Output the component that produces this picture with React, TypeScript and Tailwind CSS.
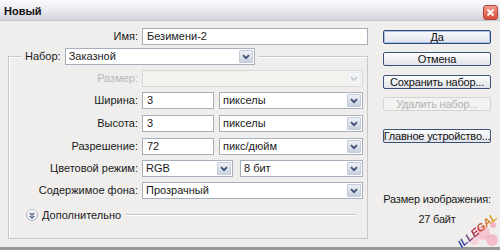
import { FC, ReactNode } from "react";

const Chevron: FC<{ faded?: boolean }> = ({ faded }) => (
  <svg width="8" height="6" viewBox="0 0 8 6">
    <path
      d="M1 1.2 L4 4.2 L7 1.2"
      fill="none"
      stroke={faded ? "#c9cdd4" : "#3c4f74"}
      strokeWidth="1.8"
    />
  </svg>
);

const Select: FC<{ value?: string; className?: string; disabled?: boolean }> = ({
  value,
  className,
  disabled,
}) => (
  <div
    className={`flex h-[17px] items-stretch border ${
      disabled ? "border-[#d6d8dc] bg-[#f4f3ef]" : "border-[#a7afbc] bg-white"
    } ${className ?? ""}`}
  >
    <div className="flex-1 truncate pl-[3px] text-[11px] leading-[15px]">{value}</div>
    <div
      className={`m-[1px] flex w-[14px] items-center justify-center rounded-[1px] border ${
        disabled
          ? "border-[#eceef2] bg-[#f3f4f7]"
          : "border-[#c3cbd9] bg-gradient-to-b from-[#eef1f7] to-[#c9d1e0]"
      }`}
    >
      <Chevron faded={disabled} />
    </div>
  </div>
);

const Input: FC<{ value: string; className?: string }> = ({ value, className }) => (
  <div
    className={`h-[17px] border border-[#a7afbc] bg-white pl-[4px] text-[11px] leading-[15px] ${
      className ?? ""
    }`}
  >
    {value}
  </div>
);

const Row: FC<{ label: string; children: ReactNode; className?: string; faded?: boolean }> = ({
  label,
  children,
  className,
  faded,
}) => (
  <div className={`flex items-center gap-[4px] ${className ?? ""}`}>
    <div
      className={`w-[129px] text-right text-[11px] leading-[17px] ${
        faded ? "text-[#b8b8b8]" : "text-[#1a1a1a]"
      }`}
    >
      {label}
    </div>
    {children}
  </div>
);

const Button: FC<{ children: ReactNode; className?: string; disabled?: boolean; primary?: boolean }> = ({
  children,
  className,
  disabled,
  primary,
}) => (
  <div
    className={`flex h-[14px] w-[108px] items-center justify-center whitespace-nowrap rounded-[2px] border text-[11px] leading-[12px] tracking-[-0.2px] ${
      disabled
        ? "border-[#d3d3d3] bg-[#f2f2f0] text-[#b2b2b2]"
        : primary
        ? "border-[#2f4a78] bg-gradient-to-b from-[#fbfbfd] to-[#dfe3ee] text-[#111] shadow-[inset_0_0_0_1px_#a9c0e8]"
        : "border-[#3d5278] bg-gradient-to-b from-[#fdfdfd] to-[#e0e3ea] text-[#111]"
    } ${className ?? ""}`}
  >
    {children}
  </div>
);

export default function App() {
  return (
    <div className="relative flex h-[250px] w-[500px] flex-col overflow-hidden bg-[#7d7d7d] font-['Liberation_Sans',Tahoma,sans-serif]">
      {/* title bar */}
      <div className="flex h-[21px] items-center justify-between border-b border-[#c4c3cc] bg-gradient-to-b from-[#fbfbfd] via-[#eaeaf0] to-[#d3d2dc] pl-[4px] pr-[2px]">
        <span className="mt-[2px] text-[11px] font-bold text-[#111]">Новый</span>
        <div className="mt-[4px] flex h-[15px] w-[15px] items-center justify-center rounded-[3px] border border-[#b0453a] bg-gradient-to-b from-[#f09a8c] to-[#d54a3a]">
          <svg width="9" height="9" viewBox="0 0 9 9">
            <path d="M1.5 1.5 L7.5 7.5 M7.5 1.5 L1.5 7.5" stroke="#fff" strokeWidth="1.8" />
          </svg>
        </div>
      </div>

      {/* body */}
      <div className="flex h-[226px] bg-[#efeeed] text-[#1a1a1a]">
        {/* left */}
        <div className="w-[375px] shrink-0 pl-[8px]">
          <div className="mt-[7px] flex items-center gap-[4px]">
            <div className="w-[130px] text-right text-[11px] leading-[17px]">Имя:</div>
            <Input value="Безимени-2" className="w-[226px]" />
          </div>

          <div className="mt-[11px] h-[183px] w-[360px] border border-[#c8c8c8] shadow-[inset_1px_1px_0_#fff]">
            <div className="-mt-[9px] ml-[13px] flex w-[236px] items-center gap-[4px] bg-[#efeeed] px-[3px]">
              <span className="text-[11px] leading-[17px]">Набор:</span>
              <Select value="Заказной" className="w-[194px]" />
            </div>

            <div className="mt-[5px] flex flex-col gap-[5px] pr-[4px]">
              <Row label="Размер:" faded>
                <Select disabled className="w-[221px]" />
              </Row>
              <Row label="Ширина:">
                <Input value="3" className="w-[72px]" />
                <Select value="пикселы" className="ml-[1px] w-[144px]" />
              </Row>
              <Row label="Высота:" className="mt-[1px]">
                <Input value="3" className="w-[72px]" />
                <Select value="пикселы" className="ml-[1px] w-[144px]" />
              </Row>
              <Row label="Разрешение:" className="mt-[1px]">
                <Input value="72" className="w-[72px]" />
                <Select value="пикс/дюйм" className="ml-[1px] w-[144px]" />
              </Row>
              <Row label="Цветовой режим:">
                <Select value="RGB" className="w-[91px]" />
                <Select value="8 бит" className="ml-[3px] w-[123px]" />
              </Row>
              <Row label="Содержимое фона:">
                <Select value="Прозрачный" className="w-[221px]" />
              </Row>
            </div>

            <div className="mt-[10px] flex items-center pl-[17px] pr-[11px]">
              <div className="flex h-[12px] w-[12px] items-center justify-center rounded-full border border-[#b9bdc6] bg-gradient-to-b from-white to-[#dfe2e8]">
                <svg width="6" height="7" viewBox="0 0 6 7">
                  <path d="M0.8 0.8 L3 3 L5.2 0.8 M0.8 3.8 L3 6 L5.2 3.8" fill="none" stroke="#3c4f74" strokeWidth="1.2" />
                </svg>
              </div>
              <span className="ml-[4px] text-[11px] leading-[12px]">Дополнительно</span>
              <div className="ml-[5px] h-[2px] flex-1 border-t border-b border-t-[#c6c6c6] border-b-white" />
            </div>
          </div>
        </div>

        {/* right */}
        <div className="flex flex-1 flex-col pl-[8px]">
          <Button primary className="mt-[9px]">Да</Button>
          <Button className="mt-[8px]">Отмена</Button>
          <Button className="mt-[9px]">Сохранить набор...</Button>
          <Button disabled className="mt-[8px]">Удалить набор...</Button>
          <Button className="mt-[18px]">Главное устройство...</Button>
          <div className="mt-[46px] w-[108px] whitespace-nowrap text-center text-[11px] leading-[20px] tracking-[-0.2px]">
            <div>Размер изображения:</div>
            <div>27 байт</div>
          </div>
        </div>
      </div>
      <div className="h-[3px] bg-[#9a9a9a]" />

      {/* watermark */}
      <div className="pointer-events-none absolute left-[458px] top-[212px] h-[36px] w-[42px]">
        <div className="absolute left-[18px] top-[14px] h-[14px] w-[14px] rounded-full bg-[#f6b3c3]/70" />
        <div className="absolute left-[28px] top-[22px] h-[12px] w-[12px] rounded-full bg-[#f5a9bb]/70" />
        <div className="absolute left-[12px] top-[24px] h-[9px] w-[9px] rounded-full bg-[#f8c4d0]/70" />
        <div className="absolute left-[32px] top-[10px] h-[6px] w-[6px] rounded-full bg-[#f3a0b4]/70" />
        <div className="absolute -left-[4px] top-[13px] -rotate-[40deg] bg-gradient-to-r from-[#1d3fb5] via-[#c0202f] to-[#e3b019] bg-clip-text text-[11px] font-bold italic leading-[11px] text-transparent">
          ILLEGAL
        </div>
      </div>
    </div>
  );
}
